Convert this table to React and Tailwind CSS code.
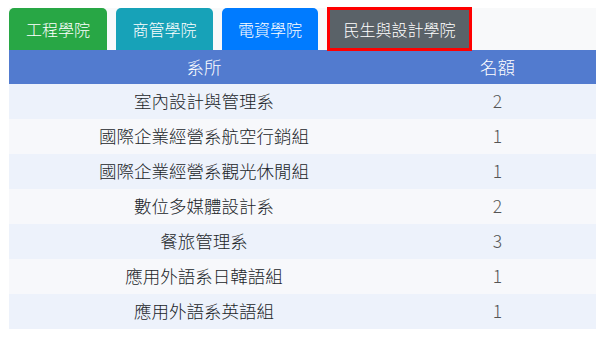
const colleges = [
  { name: "工程學院", cls: "bg-[#28a745] w-[98px]" },
  { name: "商管學院", cls: "bg-[#17a2b8] w-[97px]" },
  { name: "電資學院", cls: "bg-[#007bff] w-[96px]" },
];

const rows = [
  ["室內設計與管理系", 2],
  ["國際企業經營系航空行銷組", 1],
  ["國際企業經營系觀光休閒組", 1],
  ["數位多媒體設計系", 2],
  ["餐旅管理系", 3],
  ["應用外語系日韓語組", 1],
  ["應用外語系英語組", 1],
];

export default function App() {
  return (
    <div
      className="w-[608px] h-[341px] bg-white pl-[9px] pt-2"
      style={{ fontFamily: '"Noto Sans CJK TC", "Noto Sans", sans-serif' }}
    >
      <div className="w-[587px]">
        {/* tabs */}
        <div className="flex h-[42px] bg-[#f8f9fa] gap-[9px]">
          {colleges.map((c) => (
            <div
              key={c.name}
              className={`${c.cls} h-[42px] rounded-t-[5px] flex items-center justify-center text-white text-[16px] font-light`}
            >
              {c.name}
            </div>
          ))}
          <div className="w-[145px] h-[44px] -mt-px border-[3px] border-[#ff0000] bg-[#5a6268] flex items-center justify-center text-white text-[16px] font-light relative z-10">
            民生與設計學院
          </div>
        </div>

        {/* table */}
        <div className="grid grid-cols-[390px_1fr] h-[34px] bg-[#527bcf] text-white text-[17.5px] font-light items-center text-center">
          <div>系所</div>
          <div>名額</div>
        </div>
        {rows.map(([dept, n], i) => (
          <div
            key={dept}
            className={`grid grid-cols-[390px_1fr] h-[35px] items-center text-center text-[17.5px] font-light ${
              i % 2 === 0 ? "bg-[#edf2fb]" : "bg-[#f7f8fb]"
            }`}
          >
            <div className="text-[#212529]">{dept}</div>
            <div className="text-[#555]">{n}</div>
          </div>
        ))}
      </div>
    </div>
  );
}
